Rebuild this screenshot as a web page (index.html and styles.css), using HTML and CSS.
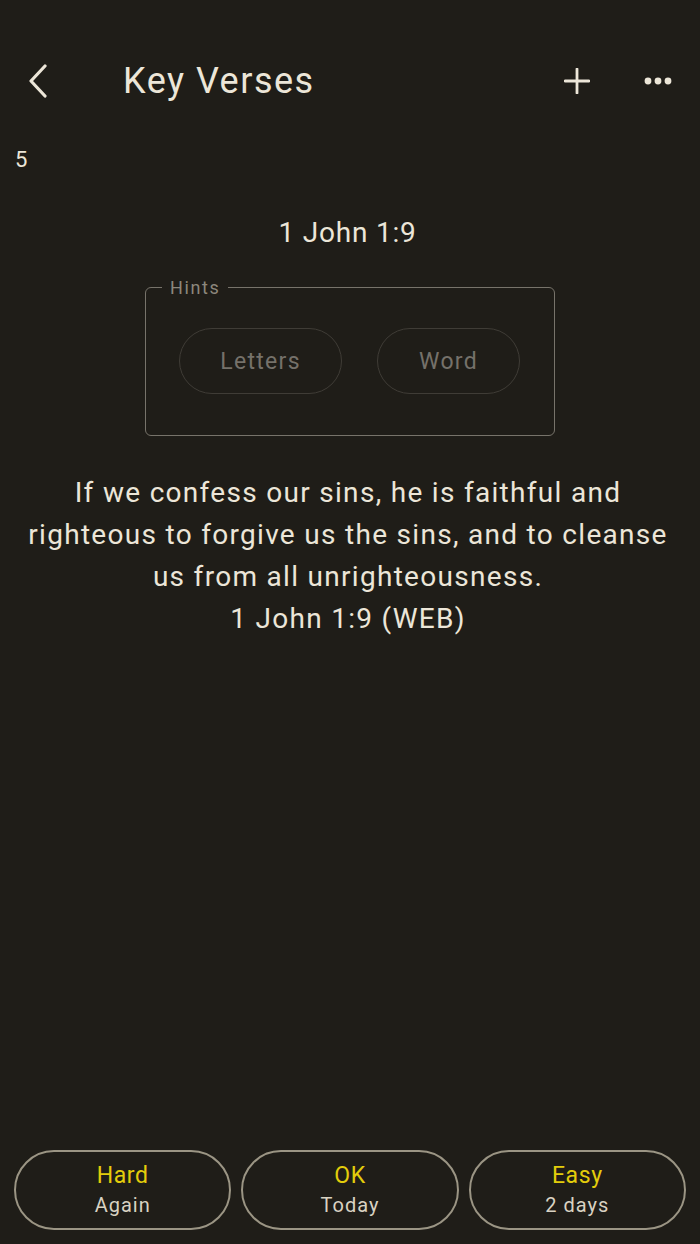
FILE: index.html
```html
<!DOCTYPE html>
<html lang="en">

<head>
    <meta charset="UTF-8">
    <meta name="viewport" content="width=device-width, initial-scale=1.0">
    <title>Key Verses</title>
    <link rel="stylesheet" href="styles.css">
</head>

<body>
    <div class="screen">
        <header class="top-bar">
            <button class="icon-btn back-btn" aria-label="Back">
                <svg width="24" height="34" viewBox="0 0 24 34">
                    <path d="M19 2 L5 17 L19 32" fill="none" stroke="#ece6d8" stroke-width="3.2" stroke-linecap="round" stroke-linejoin="round"/>
                </svg>
            </button>
            <h1 class="title">Key Verses</h1>
            <button class="icon-btn add-btn" aria-label="Add">
                <svg width="26" height="26" viewBox="0 0 26 26">
                    <path d="M13 1 V25 M1 13 H25" fill="none" stroke="#ece6d8" stroke-width="2.8" stroke-linecap="round"/>
                </svg>
            </button>
            <button class="icon-btn more-btn" aria-label="More">
                <svg width="28" height="8" viewBox="0 0 28 8">
                    <circle cx="4" cy="4" r="3.4" fill="#ece6d8"/>
                    <circle cx="14" cy="4" r="3.4" fill="#ece6d8"/>
                    <circle cx="24" cy="4" r="3.4" fill="#ece6d8"/>
                </svg>
            </button>
        </header>

        <div class="count">5</div>

        <main class="card">
            <h2 class="reference">1 John 1:9</h2>

            <fieldset class="hints">
                <legend>Hints</legend>
                <div class="hint-row">
                    <button class="hint-btn letters">Letters</button>
                    <button class="hint-btn word">Word</button>
                </div>
            </fieldset>

            <p class="verse">
                If we confess our sins, he is faithful and<br>
                righteous to forgive us the sins, and to cleanse<br>
                us from all unrighteousness.<br>
                1 John 1:9 (WEB)
            </p>
        </main>

        <footer class="answers">
            <button class="answer-btn">
                <span class="answer-label">Hard</span>
                <span class="answer-sub">Again</span>
            </button>
            <button class="answer-btn">
                <span class="answer-label">OK</span>
                <span class="answer-sub">Today</span>
            </button>
            <button class="answer-btn">
                <span class="answer-label">Easy</span>
                <span class="answer-sub">2 days</span>
            </button>
        </footer>
    </div>
</body>

</html>
```

FILE: styles.css
```css
body {
    font-family: Roboto, "Noto Sans", Arial, sans-serif;
    background-color: #1f1d18;
    color: #ece6d8;
    margin: 0;
    padding: 0;
}

.screen {
    height: 1244px;
    display: flex;
    flex-direction: column;
}

button {
    font-family: inherit;
    background: none;
    border: none;
    padding: 0;
    color: inherit;
    cursor: pointer;
}

.top-bar {
    display: flex;
    align-items: center;
    height: 48px;
    margin-top: 57px;
    padding: 0 28px 0 26px;
}

.icon-btn {
    display: flex;
    align-items: center;
    justify-content: center;
}

.back-btn {
    width: 24px;
}

.title {
    flex: 1;
    margin: 0 0 0 73px;
    font-size: 36px;
    font-weight: 400;
    letter-spacing: 1.5px;
    line-height: 48px;
}

.add-btn {
    margin-right: 54px;
}

.count {
    margin: 43px 0 0 15px;
    font-size: 22px;
    line-height: 24px;
}

.card {
    display: flex;
    flex-direction: column;
    align-items: center;
}

.reference {
    margin: 44px 0 0 -5px;
    font-size: 28px;
    font-weight: 400;
    letter-spacing: 0.8px;
    line-height: 34px;
}

.hints {
    box-sizing: border-box;
    width: 410px;
    height: 159px;
    margin: 27px 0 0 0;
    padding: 30px 0 0 0;
    border: 1.5px solid #77736a;
    border-radius: 6px;
}

.hints legend {
    margin-left: 16px;
    padding: 0 8px;
    font-size: 18px;
    letter-spacing: 1.6px;
    color: #8c877c;
}

.hint-row {
    display: flex;
    gap: 35px;
    margin-left: 33px;
}

.hint-btn {
    height: 66px;
    border: 1.5px solid #3f3c36;
    border-radius: 33px;
    font-size: 23px;
    letter-spacing: 1.3px;
    color: #75716a;
}

.letters {
    width: 163px;
}

.word {
    width: 143px;
}

.verse {
    margin: 36px 0 0 -4px;
    font-size: 28px;
    line-height: 42px;
    letter-spacing: 1.3px;
    text-align: center;
}

.answers {
    margin-top: auto;
    margin-bottom: 14px;
    padding: 0 14px;
    display: flex;
    gap: 10px;
}

.answer-btn {
    flex: 1;
    height: 80px;
    border: 2px solid #9b9584;
    border-radius: 40px;
    display: flex;
    flex-direction: column;
    align-items: center;
    justify-content: center;
    gap: 2px;
}

.answer-label {
    font-size: 23px;
    line-height: 28px;
    color: #e3cd0b;
    letter-spacing: 0.6px;
}

.answer-sub {
    font-size: 20px;
    line-height: 26px;
    color: #d9d2c2;
    letter-spacing: 1px;
}
```
